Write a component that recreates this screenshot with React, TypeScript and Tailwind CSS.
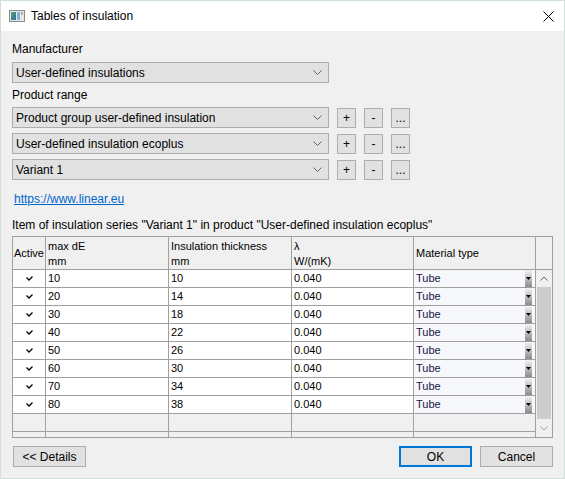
import React from "react";

const rows: [number, number][] = [
  [10, 10],
  [20, 14],
  [30, 18],
  [40, 22],
  [50, 26],
  [60, 30],
  [70, 34],
  [80, 38],
];

function Chevron() {
  return (
    <svg width="9" height="5" viewBox="0 0 9 5" className="shrink-0">
      <polyline points="0.5,0.5 4.5,4.5 8.5,0.5" fill="none" stroke="#606060" strokeWidth="1" />
    </svg>
  );
}

function Combo({ text }: { text: string }) {
  return (
    <div className="flex h-[21px] w-[317px] items-center justify-between border border-[#adadad] bg-[#e1e1e1] pl-[3px] pr-[6px]">
      <span>{text}</span>
      <Chevron />
    </div>
  );
}

function SmallBtn({ label }: { label: string }) {
  return (
    <div className="flex h-[20px] w-[19px] items-center justify-center border border-[#adadad] bg-[#e1e1e1] leading-none">
      {label}
    </div>
  );
}

function Check() {
  return (
    <svg width="7" height="5" viewBox="0 0 7 5">
      <polyline points="0.5,1.5 3,4 6.5,0.5" fill="none" stroke="#000" strokeWidth="1.3" />
    </svg>
  );
}

function TitleIcon() {
  return (
    <svg width="16" height="12" viewBox="0 0 16 12">
      <defs>
        <linearGradient id="ti" x1="0" y1="0" x2="1" y2="1">
          <stop offset="0" stopColor="#5aa06a" />
          <stop offset="1" stopColor="#2f6fa8" />
        </linearGradient>
      </defs>
      <rect x="0.5" y="0.5" width="15" height="11" fill="#e8e8e8" stroke="#8a8a8a" />
      <rect x="2" y="2" width="5" height="8" fill="url(#ti)" />
      <rect x="8" y="2" width="3" height="8" fill="#7fb0d8" />
      <rect x="12" y="2" width="2" height="3" fill="#b0b0b0" />
    </svg>
  );
}

export default function App() {
  return (
    <div
      className="flex h-[479px] w-[565px] flex-col border border-[#cfe0da] bg-[#f0f0f0] text-[12px] text-black"
      style={{ fontFamily: '"Liberation Sans", Arial, sans-serif' }}
    >
      {/* Title bar */}
      <div className="flex h-[30px] shrink-0 items-center bg-white pl-[8px] pr-[10px]">
        <TitleIcon />
        <span className="ml-[6px] text-[12px]">Tables of insulation</span>
        <div className="flex-1" />
        <svg width="11" height="11" viewBox="0 0 11 11">
          <path d="M0.5 0.5 L10.5 10.5 M10.5 0.5 L0.5 10.5" stroke="#000" strokeWidth="1" />
        </svg>
      </div>

      {/* Body */}
      <div className="flex flex-1 flex-col pl-[11px] pt-[10px]">
        <div className="leading-[16px]">Manufacturer</div>
        <div className="mt-[5px]">
          <Combo text="User-defined insulations" />
        </div>
        <div className="mt-[4px] leading-[16px]">Product range</div>
        <div className="mt-[4px] flex flex-col gap-[5px]">
          {["Product group user-defined insulation", "User-defined insulation ecoplus", "Variant 1"].map((t) => (
            <div key={t} className="flex items-center gap-[8px]">
              <Combo text={t} />
              <SmallBtn label="+" />
              <SmallBtn label="-" />
              <SmallBtn label="..." />
            </div>
          ))}
        </div>
        <div className="mt-[11px] pl-[2px] leading-[16px]">
          <span className="text-[#0066cc] underline">https://www.linear.eu</span>
        </div>
        <div className="mt-[10px] leading-[16px]">
          Item of insulation series "Variant 1" in product "User-defined insulation ecoplus"
        </div>

        {/* Grid */}
        <div className="mt-[3px] flex h-[202px] w-[541px] flex-col border border-[#a0a0a0] text-[11px]">
          <div className="flex h-[33px] shrink-0">
            <div className="flex w-[33px] items-center border-b border-r border-[#a0a0a0] pl-[1px]">Active</div>
            <div className="flex w-[123px] flex-col border-b border-r border-[#a0a0a0] pl-[2px] pt-[2px] leading-[15px]">
              <span>max dE</span>
              <span>mm</span>
            </div>
            <div className="flex w-[123px] flex-col border-b border-r border-[#a0a0a0] pl-[2px] pt-[2px] leading-[15px]">
              <span>Insulation thickness</span>
              <span>mm</span>
            </div>
            <div className="flex w-[122px] flex-col border-b border-r border-[#a0a0a0] pl-[2px] pt-[2px] leading-[15px]">
              <span>λ</span>
              <span>W/(mK)</span>
            </div>
            <div className="flex w-[122px] items-center border-b border-r border-[#a0a0a0] pl-[2px]">Material type</div>
            <div className="w-[16px] border-b border-[#a0a0a0]" />
          </div>
          <div className="flex min-h-0 flex-1">
            <div className="flex min-h-0 flex-col overflow-hidden">
              {rows.map(([d, t]) => (
                <div key={d} className="flex h-[18px] shrink-0">
                  <div className="flex w-[33px] items-center justify-center border-b border-r border-[#a0a0a0] bg-white">
                    <Check />
                  </div>
                  <div className="flex w-[123px] items-center border-b border-r border-[#a0a0a0] bg-white pl-[2px]">{d}</div>
                  <div className="flex w-[123px] items-center border-b border-r border-[#a0a0a0] bg-white pl-[2px]">{t}</div>
                  <div className="flex w-[122px] items-center border-b border-r border-[#a0a0a0] bg-white pl-[2px]">0.040</div>
                  <div className="flex w-[122px] items-center border-b border-r border-[#a0a0a0] bg-[#f6f8fb] pl-[2px] pr-[3px] text-[#1c1446]">
                    <span className="flex-1">Tube</span>
                    <div className="flex h-full w-[7px] items-center justify-center bg-gradient-to-b from-[#f4f4f4] to-[#8c8c8c]">
                      <svg width="5" height="3" viewBox="0 0 5 3">
                        <polygon points="0,0 5,0 2.5,3" fill="#000" />
                      </svg>
                    </div>
                  </div>
                </div>
              ))}
              {[0, 1].map((i) => (
                <div key={i} className="flex h-[18px] shrink-0">
                  <div className="w-[33px] border-b border-r border-[#a0a0a0]" />
                  <div className="w-[123px] border-b border-r border-[#a0a0a0]" />
                  <div className="w-[123px] border-b border-r border-[#a0a0a0]" />
                  <div className="w-[122px] border-b border-r border-[#a0a0a0]" />
                  <div className="w-[122px] border-b border-r border-[#a0a0a0]" />
                </div>
              ))}
            </div>
            {/* Scrollbar */}
            <div className="flex w-[16px] flex-col">
              <div className="flex h-[17px] shrink-0 items-center justify-center">
                <svg width="8" height="5" viewBox="0 0 8 5">
                  <polyline points="0.5,4.5 4,1 7.5,4.5" fill="none" stroke="#606060" strokeWidth="1" />
                </svg>
              </div>
              <div className="mx-[1px] flex-1 bg-[#cdcdcd]" />
              <div className="flex h-[18px] shrink-0 items-center justify-center">
                <svg width="8" height="5" viewBox="0 0 8 5">
                  <polyline points="0.5,0.5 4,4 7.5,0.5" fill="none" stroke="#a0a0a0" strokeWidth="1" />
                </svg>
              </div>
            </div>
          </div>
        </div>

        {/* Buttons */}
        <div className="mt-[8px] flex w-[541px] items-center">
          <div className="ml-[1px] flex h-[21px] w-[73px] items-center justify-center border border-[#adadad] bg-[#e1e1e1]">
            &lt;&lt; Details
          </div>
          <div className="flex-1" />
          <div className="flex h-[21px] w-[73px] items-center justify-center border-2 border-[#0078d7] bg-[#e1e1e1]">
            OK
          </div>
          <div className="ml-[8px] flex h-[21px] w-[73px] items-center justify-center border border-[#adadad] bg-[#e1e1e1]">
            Cancel
          </div>
        </div>
      </div>
    </div>
  );
}
